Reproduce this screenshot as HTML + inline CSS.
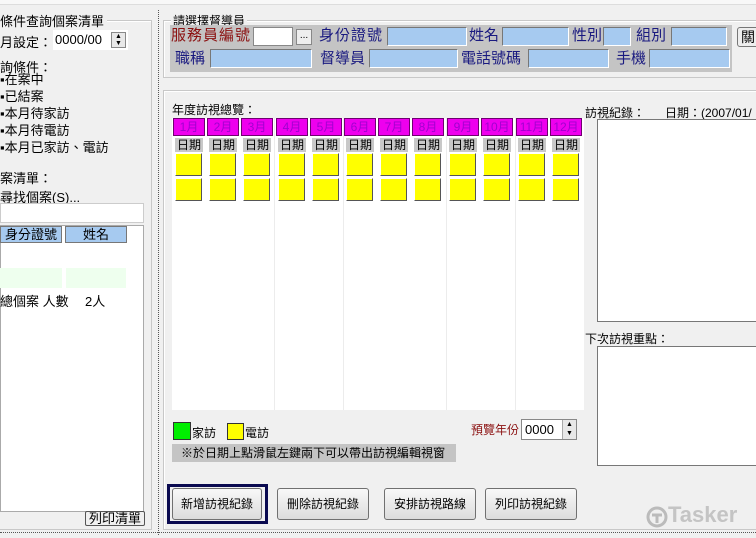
<!DOCTYPE html>
<html><head><meta charset="utf-8">
<style>
*{box-sizing:border-box;margin:0;padding:0}
body{width:756px;height:538px;overflow:hidden;background:#f0f0f0;position:relative;font-family:"Liberation Sans","Noto Sans CJK TC",sans-serif;font-size:12px;color:#000}
.a{position:absolute;white-space:nowrap}
.big{font-size:15px;color:#1a1a80;line-height:18px}
.bin{background:#a6caf0;border:1px solid #fff;border-top-color:#777;border-left-color:#777;height:19px}
.m{position:absolute;top:118px;width:32px;height:18px;background:#ee00ee;border:1px solid #700070;color:#a000d0;font-size:12px;text-align:center;line-height:16px}
.d{position:absolute;top:138px;width:28px;height:14px;background:#c8c8c8;font-size:12px;text-align:center;line-height:14px}
.y{position:absolute;width:27px;height:23px;background:#ffff00;border:1px solid;border-color:#fff #555 #555 #fff}
.btn{position:absolute;top:488px;height:32px;background:linear-gradient(#f8f8f8,#dcdcdc);border:1px solid #707070;border-radius:3px;font-size:12px;text-align:center;line-height:30px}
.gb{position:absolute;border:1px solid #c8c8c8;box-shadow:inset 1px 1px 0 #fff}
.vl{position:absolute;top:118px;width:1px;height:292px;background:#ececec}
.lt{font-size:13px}
</style></head><body>
<div class="a" style="left:0;top:0;width:756px;height:5px;background:#f8f8f8;border-bottom:1px solid #ddd"></div>
<div class="a" style="left:158px;top:10px;height:525px;border-left:1px dotted #555"></div>
<div class="a" style="left:0;top:532px;width:756px;border-top:1px dotted #555"></div>

<div class="gb" style="left:-2px;top:20px;width:154px;height:510px"></div>
<div class="a lt" style="left:0;top:11px;background:#f0f0f0;padding-right:3px">條件查詢個案清單</div>
<div class="a lt" style="left:0;top:32px">月設定：</div>
<div class="a" style="left:53px;top:30px;width:75px;height:20px;background:#fff;line-height:20px;padding-left:2px;font-size:13px">0000/00</div>
<div class="a" style="left:111px;top:32px;width:15px;height:16px;border:1px solid #888;background:#e8e8e8;font-size:7px;line-height:7px;text-align:center">▲<br>▼</div>
<div class="a lt" style="left:0;top:57px">詢條件：</div>
<div class="a lt" style="left:0;top:71px;line-height:17px">▪在案中<br>▪已結案<br>▪本月待家訪<br>▪本月待電訪<br>▪本月已家訪、電訪</div>
<div class="a lt" style="left:0;top:168px">案清單：</div>
<div class="a lt" style="left:0;top:187px">尋找個案(S)...</div>
<div class="a" style="left:0;top:203px;width:144px;height:20px;background:#fff;border:1px solid #ccc"></div>
<div class="a" style="left:0;top:225px;width:144px;height:287px;background:#fff;border:1px solid #aaa"></div>
<div class="a lt" style="left:0;top:226px;width:62px;height:17px;background:#a6caf0;border:1px solid #777;text-align:center;line-height:15px">身分證號</div>
<div class="a lt" style="left:65px;top:226px;width:62px;height:17px;background:#a6caf0;border:1px solid #777;text-align:center;line-height:15px">姓名</div>
<div class="a" style="left:0;top:268px;width:62px;height:20px;background:#eeffee"></div>
<div class="a" style="left:66px;top:268px;width:60px;height:20px;background:#eeffee"></div>
<div class="a lt" style="left:0;top:291px">總個案 人數</div>
<div class="a lt" style="left:85px;top:291px">2人</div>
<div class="a lt" style="left:85px;top:511px;width:60px;height:15px;border:1px solid #555;border-radius:2px;background:#f0f0f0;text-align:center;line-height:13px">列印清單</div>

<div class="gb" style="left:163px;top:20px;width:600px;height:58px"></div>
<div class="a" style="left:171px;top:12px;background:#f0f0f0;padding:0 2px">請選擇督導員</div>
<div class="a" style="left:170px;top:25px;width:562px;height:47px;background:#c4c4c4"></div>
<div class="a big" style="left:171px;top:27px;color:#8b1010;letter-spacing:1px">服務員編號</div>
<div class="a" style="left:253px;top:27px;width:40px;height:19px;background:#fff;border:1px solid #888"></div>
<div class="a" style="left:296px;top:29px;width:16px;height:16px;background:#eee;border:1px solid #888;font-size:10px;text-align:center;line-height:12px">...</div>
<div class="a big" style="left:319px;top:27px;letter-spacing:1px">身份證號</div>
<div class="a bin" style="left:387px;top:27px;width:80px"></div>
<div class="a big" style="left:469px;top:27px">姓名</div>
<div class="a bin" style="left:502px;top:27px;width:67px"></div>
<div class="a big" style="left:572px;top:27px">性別</div>
<div class="a bin" style="left:603px;top:27px;width:28px"></div>
<div class="a big" style="left:636px;top:27px">組別</div>
<div class="a bin" style="left:671px;top:27px;width:56px"></div>
<div class="a" style="left:737px;top:27px;width:30px;height:20px;background:#eee;border:1px solid #777;border-radius:3px;font-size:14px;padding-left:3px;line-height:18px">關</div>
<div class="a big" style="left:175px;top:50px">職稱</div>
<div class="a bin" style="left:210px;top:49px;width:102px"></div>
<div class="a big" style="left:320px;top:50px">督導員</div>
<div class="a bin" style="left:369px;top:49px;width:89px"></div>
<div class="a big" style="left:461px;top:50px">電話號碼</div>
<div class="a bin" style="left:528px;top:49px;width:81px"></div>
<div class="a big" style="left:616px;top:50px">手機</div>
<div class="a bin" style="left:649px;top:49px;width:81px"></div>

<div class="gb" style="left:163px;top:90px;width:600px;height:440px"></div>
<div class="a" style="left:172px;top:101px">年度訪視總覽：</div>
<div class="a" style="left:172px;top:118px;width:412px;height:292px;background:#fff"></div>
<div class="vl" style="left:274px"></div><div class="vl" style="left:343px"></div><div class="vl" style="left:446px"></div><div class="vl" style="left:515px"></div>

<div class="m" style="left:173px">1月</div><div class="m" style="left:207px">2月</div><div class="m" style="left:241px">3月</div><div class="m" style="left:276px">4月</div><div class="m" style="left:310px">5月</div><div class="m" style="left:344px">6月</div><div class="m" style="left:378px">7月</div><div class="m" style="left:412px">8月</div><div class="m" style="left:447px">9月</div><div class="m" style="left:481px">10月</div><div class="m" style="left:516px">11月</div><div class="m" style="left:550px">12月</div>

<div class="d" style="left:175px">日期</div><div class="d" style="left:209px">日期</div><div class="d" style="left:243px">日期</div><div class="d" style="left:278px">日期</div><div class="d" style="left:312px">日期</div><div class="d" style="left:346px">日期</div><div class="d" style="left:380px">日期</div><div class="d" style="left:414px">日期</div><div class="d" style="left:449px">日期</div><div class="d" style="left:483px">日期</div><div class="d" style="left:518px">日期</div><div class="d" style="left:552px">日期</div>

<div class="y" style="left:175px;top:153px"></div><div class="y" style="left:209px;top:153px"></div><div class="y" style="left:243px;top:153px"></div><div class="y" style="left:278px;top:153px"></div><div class="y" style="left:312px;top:153px"></div><div class="y" style="left:346px;top:153px"></div><div class="y" style="left:380px;top:153px"></div><div class="y" style="left:414px;top:153px"></div><div class="y" style="left:449px;top:153px"></div><div class="y" style="left:483px;top:153px"></div><div class="y" style="left:518px;top:153px"></div><div class="y" style="left:552px;top:153px"></div>
<div class="y" style="left:175px;top:178px"></div><div class="y" style="left:209px;top:178px"></div><div class="y" style="left:243px;top:178px"></div><div class="y" style="left:278px;top:178px"></div><div class="y" style="left:312px;top:178px"></div><div class="y" style="left:346px;top:178px"></div><div class="y" style="left:380px;top:178px"></div><div class="y" style="left:414px;top:178px"></div><div class="y" style="left:449px;top:178px"></div><div class="y" style="left:483px;top:178px"></div><div class="y" style="left:518px;top:178px"></div><div class="y" style="left:552px;top:178px"></div>

<div class="a" style="left:173px;top:422px;width:18px;height:18px;background:#00ee00;border:1px solid #333"></div>
<div class="a" style="left:192px;top:424px">家訪</div>
<div class="a" style="left:227px;top:423px;width:17px;height:17px;background:#ffff00;border:1px solid #333"></div>
<div class="a" style="left:245px;top:424px">電訪</div>
<div class="a" style="left:172px;top:444px;width:284px;height:18px;background:#c4c4c4;padding-left:9px;line-height:18px">※於日期上點滑鼠左鍵兩下可以帶出訪視編輯視窗</div>
<div class="a" style="left:471px;top:421px;color:#8b1010">預覽年份</div>
<div class="a" style="left:521px;top:419px;width:56px;height:21px;background:#fff;border:1px solid #888;font-size:13px;line-height:19px;padding-left:3px">0000</div>
<div class="a" style="left:562px;top:420px;width:14px;height:19px;background:#e8e8e8;border-left:1px solid #aaa;font-size:7px;line-height:9px;text-align:center">▲<br>▼</div>

<div class="a" style="left:585px;top:104px">訪視紀錄：</div>
<div class="a" style="left:665px;top:104px">日期：(2007/01/</div>
<div class="a" style="left:597px;top:119px;width:162px;height:203px;background:#fff;border:1px solid #777"></div>
<div class="a" style="left:585px;top:330px">下次訪視重點：</div>
<div class="a" style="left:597px;top:346px;width:162px;height:120px;background:#fff;border:1px solid #777"></div>

<div class="a" style="left:167px;top:484px;width:101px;height:40px;border:3px solid #0a0a50"></div>
<div class="btn" style="left:172px;width:90px">新增訪視紀錄</div>
<div class="btn" style="left:277px;width:92px">刪除訪視紀錄</div>
<div class="btn" style="left:384px;width:92px">安排訪視路線</div>
<div class="btn" style="left:485px;width:92px">列印訪視紀錄</div>

<svg class="a" style="left:646px;top:506px" width="22" height="22" viewBox="0 0 22 22"><circle cx="11" cy="11" r="9" fill="none" stroke="#bbb" stroke-width="3"/><path d="M6 9h10M11 9v8" stroke="#bbb" stroke-width="3"/></svg>
<div class="a" style="left:668px;top:502px;font-size:22px;font-weight:bold;color:#c4c4c4">Tasker</div>
</body></html>
